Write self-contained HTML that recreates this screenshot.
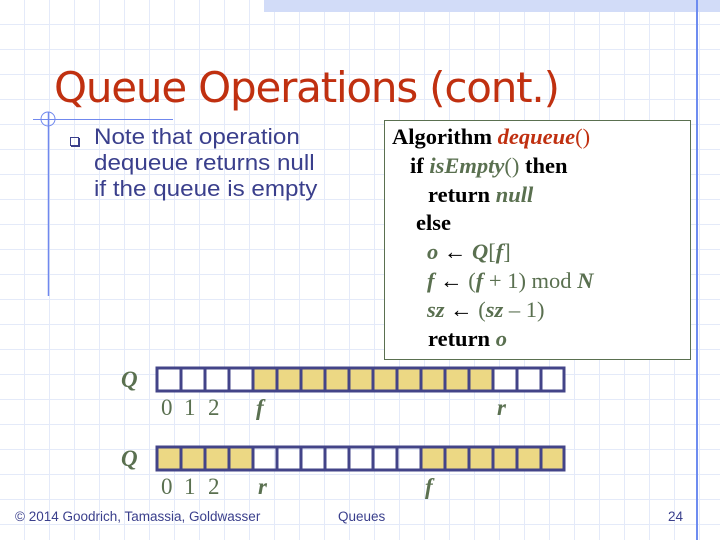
<!DOCTYPE html>
<html><head><meta charset="utf-8"><style>
html,body{margin:0;padding:0}
body{width:720px;height:540px;position:relative;overflow:hidden;background:#fff;
background-image:repeating-linear-gradient(to right,transparent 0 24px,#e4eaf9 24px 25px),repeating-linear-gradient(to bottom,transparent 0 24px,#e4eaf9 24px 25px);
background-position:0 0;}
.band{position:absolute;left:264px;top:0;width:456px;height:12px;background:#d2dcf8;}
.vl{position:absolute;left:696px;top:0;width:2px;height:540px;background:#6e8cf0;}
.title{position:absolute;left:54px;top:63px;font:42px "DejaVu Sans",sans-serif;color:#c03010;letter-spacing:-1.2px;}
.bul{position:absolute;left:94px;top:124px;font:22px "Liberation Sans",sans-serif;color:#3a3f8c;line-height:26px;transform:scaleX(1.1);transform-origin:left;}
.sq{position:absolute;left:70px;top:137px;width:7px;height:7px;border:1px solid #3a3f8c;box-shadow:1px 1px 0 #3a3f8c;}
.box{position:absolute;left:384px;top:120px;width:305px;height:238px;border:1px solid #5a7050;background:#fff;}
.code{position:absolute;left:392px;top:123px;font:bold 22.5px "Liberation Serif",serif;line-height:28.8px;color:#000;white-space:pre;}
.code div{height:28.8px}
.g{color:#5a7050;font-style:italic;font-weight:bold}
.r{color:#c03010;font-style:italic;font-weight:bold}
.gn{color:#5a7050;font-weight:normal}
.foot{position:absolute;top:509px;font:13.5px "Liberation Sans",sans-serif;color:#3a3f8c;}
</style></head><body>
<div class="band"></div><div class="vl"></div>
<svg style="position:absolute;left:0;top:0" width="720" height="540">
<line x1="33" y1="119.5" x2="173" y2="119.5" stroke="#7088ee" stroke-width="1"/>
<line x1="48.5" y1="112" x2="48.5" y2="296" stroke="#7088ee" stroke-width="1.5"/>
<circle cx="48" cy="119" r="7" fill="none" stroke="#7088ee" stroke-width="1"/>
<g stroke="#434488" stroke-width="3">
<rect x="157" y="368" width="407" height="23" fill="#fff"/>
<rect x="253" y="368" width="240" height="23" fill="#ecd884"/>
<rect x="157" y="447" width="96" height="23" fill="#ecd884"/>
<rect x="421" y="447" width="143" height="23" fill="#ecd884"/>
<rect x="157" y="447" width="407" height="23" fill="none"/>
<path d="M181 368v23M205 368v23M229 368v23M253 368v23M277 368v23M301 368v23M325 368v23M349 368v23M373 368v23M397 368v23M421 368v23M445 368v23M469 368v23M493 368v23M517 368v23M541 368v23"/>
<path d="M181 447v23M205 447v23M229 447v23M253 447v23M277 447v23M301 447v23M325 447v23M349 447v23M373 447v23M397 447v23M421 447v23M445 447v23M469 447v23M493 447v23M517 447v23M541 447v23"/>
</g>
<g font-family="Liberation Serif,serif" font-size="23" fill="#5a7050">
<text x="121" y="387" font-weight="bold" font-style="italic">Q</text>
<text x="121" y="466" font-weight="bold" font-style="italic">Q</text>
<text x="161" y="415">0</text><text x="184" y="415">1</text><text x="208" y="415">2</text>
<text x="256" y="415" font-weight="bold" font-style="italic">f</text>
<text x="497" y="415" font-weight="bold" font-style="italic">r</text>
<text x="161" y="494">0</text><text x="184" y="494">1</text><text x="208" y="494">2</text>
<text x="258" y="494" font-weight="bold" font-style="italic">r</text>
<text x="425" y="494" font-weight="bold" font-style="italic">f</text>
</g>
</svg>
<div class="title">Queue Operations (cont.)</div>
<div class="sq"></div>
<div class="bul">Note that operation<br>dequeue returns null<br>if the queue is empty</div>
<div class="box"></div>
<div class="code"><div>Algorithm <span class="r">dequeue</span><span style="color:#c03010;font-weight:normal">()</span></div><div style="padding-left:18px">if <span class="g">isEmpty</span><span class="gn">()</span> then</div><div style="padding-left:36px">return <span class="g">null</span></div><div style="padding-left:24px">else</div><div style="padding-left:35px"><span class="g">o</span> ← <span class="g">Q</span><span class="gn">[</span><span class="g">f</span><span class="gn">]</span></div><div style="padding-left:35px"><span class="g">f</span> ← <span class="gn">(</span><span class="g">f</span> <span class="gn">+ 1) mod</span> <span class="g">N</span></div><div style="padding-left:35px"><span class="g">sz</span> ← <span class="gn">(</span><span class="g">sz</span> <span class="gn">– 1)</span></div><div style="padding-left:36px">return <span class="g">o</span></div></div>
<div class="foot" style="left:15px">© 2014 Goodrich, Tamassia, Goldwasser</div>
<div class="foot" style="left:338px">Queues</div>
<div class="foot" style="left:668px">24</div>
</body></html>
